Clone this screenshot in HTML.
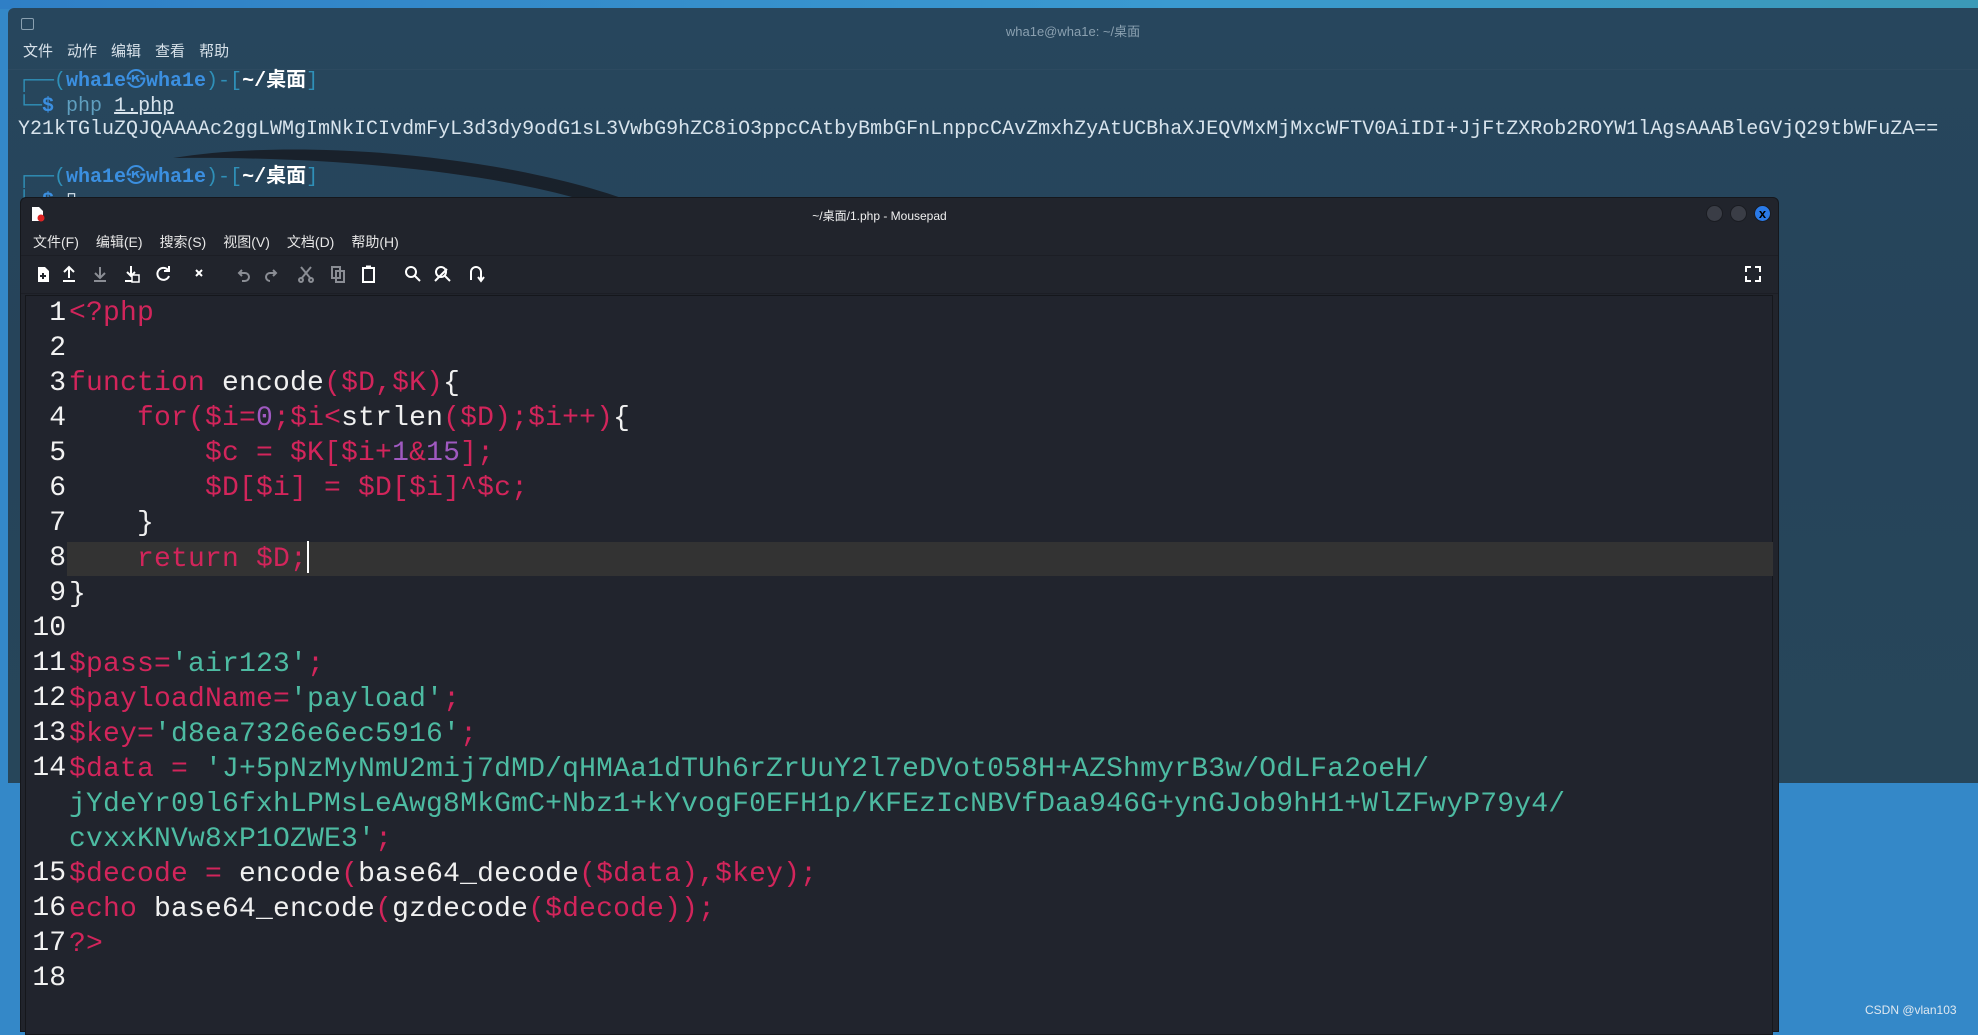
<!DOCTYPE html>
<html><head><meta charset="utf-8"><style>
*{margin:0;padding:0;box-sizing:border-box}
body{width:1978px;height:1027px;overflow:hidden;background:#3488c8;position:relative;font-family:"Liberation Sans","Noto Sans CJK SC",sans-serif}
.topband{position:absolute;left:0;top:0;width:1978px;height:9px;background:linear-gradient(90deg,#2f7fc6,#3a9ad0 60%,#3b9ab8)}
.term{position:absolute;left:8px;top:8px;width:1970px;height:775px;background:linear-gradient(180deg,#27465d,#26445a 50%,#27465a);border-radius:6px 0 0 0;overflow:hidden}
.term .ttl{position:absolute;left:80px;width:100%;top:13px;text-align:center;font-size:13px;color:#8aa0b0}
.term .tico{position:absolute;left:13px;top:10px;width:13px;height:12px;border:1px solid #8aa0b0;border-radius:2px}
.term .menu{position:absolute;top:32px;left:15px;font-size:15px;color:#d8e2ea}
.term .menu span{margin-right:14px}
.term .menuline{position:absolute;top:61px;left:0;width:100%;height:1px;background:#2d4a60}
.tl{position:absolute;left:10px;font-family:"Liberation Mono","Noto Sans CJK SC",monospace;font-size:20px;white-space:pre;color:#d7e3ec;line-height:24px}
.b{color:#3b8fe0;font-weight:bold}.c{color:#2f90b8}.w{color:#fff;font-weight:bold}.g{color:#5f9fbf}
.mp{position:absolute;left:20px;top:197px;width:1759px;height:835px;background:#21242c;border:1px solid #15171c;border-radius:6px 6px 0 0}
.mp .ttl{position:absolute;top:9px;width:100%;padding-right:40px;text-align:center;font-size:12px;color:#f0f0f0}
.btn{position:absolute;top:7px;width:17px;height:17px;border-radius:50%;background:#3a3d46;border:1px solid #1a1c22}
.mp .menu{position:absolute;top:34px;left:12px;font-size:14px;color:#e6e6e6}
.mp .menu span{margin-right:17px}
.sep{position:absolute;left:0;width:100%;height:1px;background:#1c1e25}
.ed{position:absolute;left:4px;top:97px;width:1748px;height:740px;background:#21242d;border:1px solid #15171c}
.code{position:absolute;left:0;top:0;font-family:"Liberation Mono",monospace;font-size:28px;line-height:35px;white-space:pre;color:#f0f0f0;letter-spacing:0.2px}
.ln{position:absolute;left:0;width:40px;text-align:right;color:#f2f2f2;letter-spacing:0}
.r{color:#d2255b}.t{color:#4dbba2}.p{color:#9f59c0}
</style></head><body>
<div class="topband"></div>
<div class="term">
 <svg style="position:absolute;left:0;top:0" width="1970" height="775"><path d="M165 150 C 300 128 520 150 640 200 L 600 200 C 500 165 330 148 165 150 Z" fill="#181b22" opacity="0.85"/></svg>
 <div class="tico"></div>
 <div class="ttl">wha1e@wha1e: ~/桌面</div>
 <div class="menu"><span>文件</span><span>动作</span><span>编辑</span><span>查看</span><span>帮助</span></div>
 <div class="menuline"></div>
 <div class="tl" style="top:62px"><span class="c">┌──(</span><span class="b">wha1e㉿wha1e</span><span class="c">)-[</span><span class="w">~/桌面</span><span class="c">]</span></div>
 <div class="tl" style="top:87px"><span class="c">└─</span><span class="b">$</span> <span class="g">php</span> <span style="text-decoration:underline">1.php</span></div>
 <div class="tl" style="top:110px;left:10px">Y21kTGluZQJQAAAAc2ggLWMgImNkICIvdmFyL3d3dy9odG1sL3VwbG9hZC8iO3ppcCAtbyBmbGFnLnppcCAvZmxhZyAtUCBhaXJEQVMxMjMxcWFTV0AiIDI+JjFtZXRob2ROYW1lAgsAAABleGVjQ29tbWFuZA==</div>
 <div class="tl" style="top:158px"><span class="c">┌──(</span><span class="b">wha1e㉿wha1e</span><span class="c">)-[</span><span class="w">~/桌面</span><span class="c">]</span></div>
 <div class="tl" style="top:182px"><span class="c">└─</span><span class="b">$</span> ▯</div>
</div>
<div style="position:absolute;left:1865px;top:1003px;font-size:12px;color:#dfe8f0">CSDN @vlan103</div>
<div class="mp">
 <svg style="position:absolute;left:10px;top:8px" width="14" height="16"><path d="M1 1h7l4 4v10H1z" fill="#fff"/><circle cx="10" cy="12" r="3.5" fill="#d22"/></svg>
 <div class="ttl">~/桌面/1.php - Mousepad</div>
 <div class="btn" style="left:1685px"></div><div class="btn" style="left:1709px"></div>
 <div class="btn" style="left:1733px;background:#2a7ae8;color:#000;font-size:13px;font-weight:bold;text-align:center;line-height:15px">x</div>
 <div class="menu"><span>文件(F)</span><span>编辑(E)</span><span>搜索(S)</span><span>视图(V)</span><span>文档(D)</span><span>帮助(H)</span></div>
 <div class="sep" style="top:57px"></div>
 <svg style="position:absolute;left:0;top:66px" width="480" height="20" fill="none" stroke-width="2">
  <path d="M17 3h7l4 4v11H17z" fill="#fff"/><path d="M22 9v6M19 12h6" stroke="#21242c"/>
  <path d="M48 3v11M43 8l5-5 5 5M42 17h12" stroke="#fff"/>
  <path d="M79 3v11M74 9l5 5 5-5M73 17h12" stroke="#8a8d94"/>
  <path d="M110 2v10M106 8l4 4 4-4M104 17h7" stroke="#fff"/><rect x="111" y="11" width="7" height="7" stroke="#fff" stroke-width="1.5"/>
  <path d="M147 6a6 6 0 1 0 1 6M148 2v5h-5" stroke="#fff"/>
  <path d="M175 6l6 6M181 6l-6 6" stroke="#fff"/>
  <path d="M221 6l-3 3 3 3M218 9h6a4 4 0 0 1 0 8h-3" stroke="#8a8d94"/>
  <path d="M252 6l3 3-3 3M255 9h-6a4 4 0 0 0 0 8" stroke="#8a8d94"/>
  <path d="M280 3l10 12M290 3l-10 12" stroke="#8a8d94"/><circle cx="280" cy="16" r="2" stroke="#8a8d94"/><circle cx="290" cy="16" r="2" stroke="#8a8d94"/>
  <rect x="311" y="3" width="8" height="11" stroke="#8a8d94"/><rect x="315" y="7" width="8" height="11" stroke="#8a8d94"/>
  <rect x="342" y="4" width="11" height="14" stroke="#fff"/><path d="M345 3h5" stroke="#fff" stroke-width="3"/>
  <circle cx="390" cy="8" r="5" stroke="#fff"/><path d="M394 12l5 5" stroke="#fff"/>
  <circle cx="420" cy="8" r="5" stroke="#fff"/><path d="M414 17l12-12M424 12l5 5" stroke="#fff"/>
  <path d="M450 16V8a5 5 0 0 1 10 0v8M457 13l3 4 3-4" stroke="#fff"/>
 </svg>
 <svg style="position:absolute;left:1724px;top:68px" width="16" height="16" stroke="#fff" stroke-width="2" fill="none"><path d="M1 6V1h5M10 1h5v5M15 10v5h-5M6 15H1v-5"/></svg>
 <div class="sep" style="top:95px"></div>
 <div class="ed">
  <div style="position:absolute;left:41px;top:246px;width:1706px;height:34px;background:#333333"></div>
  <div class="code">
<div class="ln" style="top:0">1</div><div class="ln" style="top:35px">2</div><div class="ln" style="top:70px">3</div><div class="ln" style="top:105px">4</div><div class="ln" style="top:140px">5</div><div class="ln" style="top:175px">6</div><div class="ln" style="top:210px">7</div><div class="ln" style="top:245px">8</div><div class="ln" style="top:280px">9</div><div class="ln" style="top:315px">10</div><div class="ln" style="top:350px">11</div><div class="ln" style="top:385px">12</div><div class="ln" style="top:420px">13</div><div class="ln" style="top:455px">14</div><div class="ln" style="top:560px">15</div><div class="ln" style="top:595px">16</div><div class="ln" style="top:630px">17</div><div class="ln" style="top:665px">18</div>
<div style="position:absolute;left:43px;top:0"><span class="r">&lt;?php</span>

<span class="r">function</span> encode<span class="r">($D,$K)</span>{
    <span class="r">for($i=</span><span class="p">0</span><span class="r">;$i&lt;</span>strlen<span class="r">($D);$i++)</span>{
        <span class="r">$c = $K[$i+</span><span class="p">1</span><span class="r">&amp;</span><span class="p">15</span><span class="r">];</span>
        <span class="r">$D[$i] = $D[$i]^$c;</span>
    }
    <span class="r">return $D;</span><span style="display:inline-block;width:2px;height:32px;background:#fff;vertical-align:-7px"></span>
}

<span class="r">$pass=</span><span class="t">'air123'</span><span class="r">;</span>
<span class="r">$payloadName=</span><span class="t">'payload'</span><span class="r">;</span>
<span class="r">$key=</span><span class="t">'d8ea7326e6ec5916'</span><span class="r">;</span>
<span class="r">$data = </span><span class="t">'J+5pNzMyNmU2mij7dMD/qHMAa1dTUh6rZrUuY2l7eDVot058H+AZShmyrB3w/OdLFa2oeH/
jYdeYr09l6fxhLPMsLeAwg8MkGmC+Nbz1+kYvogF0EFH1p/KFEzIcNBVfDaa946G+ynGJob9hH1+WlZFwyP79y4/
cvxxKNVw8xP1OZWE3'</span><span class="r">;</span>
<span class="r">$decode = </span>encode<span class="r">(</span>base64_decode<span class="r">($data),$key);</span>
<span class="r">echo</span> base64_encode<span class="r">(</span>gzdecode<span class="r">($decode));</span>
<span class="r">?&gt;</span>
</div>
  </div>
 </div>
</div>
</body></html>
